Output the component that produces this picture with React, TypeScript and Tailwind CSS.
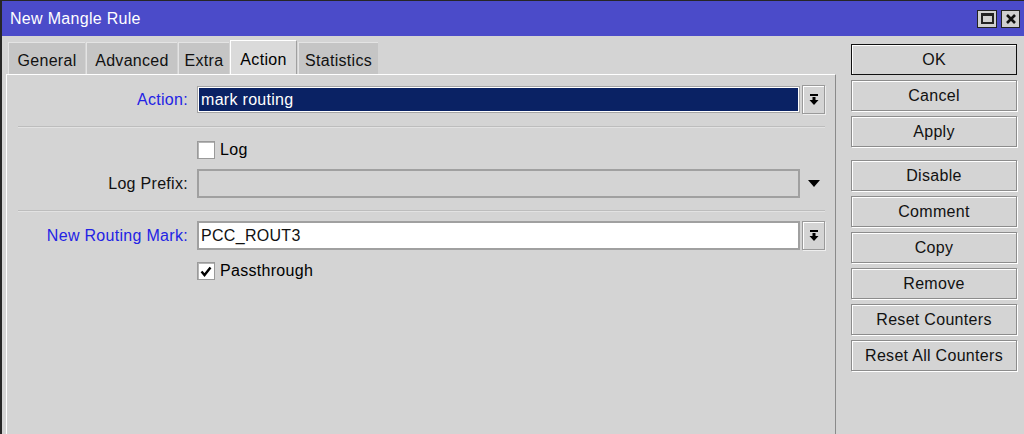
import React from "react";

const FONT = "font-['Liberation_Sans',Arial,sans-serif]";

function DropArrow() {
  return (
    <svg width="10" height="12" viewBox="0 0 10 12">
      <rect x="1" y="0" width="8" height="2" fill="#000" />
      <rect x="3.5" y="3" width="3" height="3" fill="#000" />
      <polygon points="0.5,6 9.5,6 5,11" fill="#000" />
    </svg>
  );
}

function DropButton() {
  return (
    <div className="ml-[2px] flex h-[29px] w-[23px] items-center justify-center border border-[#9a9a9a] shadow-[inset_1px_1px_0_#fff,1px_1px_0_#eee]">
      <DropArrow />
    </div>
  );
}

function Checkbox({ checked }: { checked?: boolean }) {
  return (
    <div className="flex h-[18px] w-[18px] items-center justify-center border border-[#9a9a9a] bg-white shadow-[inset_1px_1px_0_#b5b5b5]">
      {checked && (
        <svg width="12" height="11" viewBox="0 0 12 11">
          <polyline points="1.5,5.5 4.5,9 10.5,1.5" fill="none" stroke="#000" strokeWidth="2.4" />
        </svg>
      )}
    </div>
  );
}

function Separator() {
  return <div className="ml-[11px] h-[2px] w-[807px] border-t border-b border-t-[#bdbdbd] border-b-[#e2e2e2]" />;
}

function Row({ label, blue, children }: { label: string; blue?: boolean; children: React.ReactNode }) {
  return (
    <div className="flex h-[29px] items-center">
      <div className={`w-[181px] text-right ${blue ? "text-[#2323e4]" : "text-[#111]"}`}>{label}</div>
      <div className="ml-[9px] flex items-center">{children}</div>
    </div>
  );
}

const TABS = [
  { name: "General", w: "w-[77px]" },
  { name: "Advanced", w: "w-[91px]" },
  { name: "Extra", w: "w-[51px]" },
  { name: "Action", w: "w-[67px]", active: true },
  { name: "Statistics", w: "w-[80px]" },
];

const BUTTONS_TOP = ["Cancel", "Apply"];
const BUTTONS_BOTTOM = ["Disable", "Comment", "Copy", "Remove", "Reset Counters", "Reset All Counters"];

function Btn({ label, main }: { label: string; main?: boolean }) {
  return (
    <div
      className={`flex h-[31px] w-[166px] items-center justify-center text-[#111] ${
        main
          ? "border border-[#111] shadow-[inset_1px_1px_0_#fff]"
          : "border border-[#8c8c8c] shadow-[inset_1px_1px_0_#fff,1px_1px_0_#fff]"
      }`}
    >
      {label}
    </div>
  );
}

export default function App() {
  return (
    <div className={`${FONT} flex h-[434px] w-[1024px] flex-col overflow-hidden border-l-2 border-t border-[#262626] bg-[#d4d4d4] text-[16px] tracking-[0.3px]`}>
      {/* Title bar */}
      <div className="flex h-[35px] shrink-0 items-center justify-between bg-[#4b4bc9] pl-[8px] pr-[4px]">
        <span className="text-white">New Mangle Rule</span>
        <div className="flex gap-[4px]">
          <div className="flex h-[18px] w-[20px] items-center justify-center border border-[#222] bg-[#d0d0d0]">
            <div className="h-[11px] w-[13px] border-2 border-t-[3px] border-[#222]" />
          </div>
          <div className="flex h-[18px] w-[19px] items-center justify-center border border-[#222] bg-[#d0d0d0]">
            <svg width="10" height="10" viewBox="0 0 10 10">
              <path d="M1 1 L9 9 M9 1 L1 9" stroke="#111" strokeWidth="2.6" />
            </svg>
          </div>
        </div>
      </div>

      <div className="flex flex-1">
        {/* Left: tabs + panel */}
        <div className="flex w-[834px] flex-col pt-[4px]">
          <div className="flex h-[34px] items-end gap-[1px] pl-[6px]">
            {TABS.map((t) =>
              t.active ? (
                <div
                  key={t.name}
                  className={`${t.w} flex h-[34px] items-start justify-center border-l border-t border-r border-l-white border-t-white border-r-[#a0a0a0] bg-[#dadada] pt-[7px]`}
                >
                  {t.name}
                </div>
              ) : (
                <div
                  key={t.name}
                  className={`${t.w} flex h-[32px] items-center justify-center border-l border-t border-l-[#e4e4e4] border-t-[#e4e4e4] bg-[#c5c5c5] pt-[4px] text-[#111]`}
                >
                  {t.name}
                </div>
              )
            )}
          </div>

          <div className="ml-[4px] flex w-[830px] flex-1 flex-col border-l border-t border-r border-l-white border-t-white border-r-[#8a8a8a]">
            <div className="mt-[10px]">
              <Row label="Action:" blue>
                <div className="h-[27px] w-[603px] border border-[#a5a5a5] bg-white p-[1px]">
                  <div className="flex h-full items-center bg-[#0a2264] pl-[2px] text-white">mark routing</div>
                </div>
                <DropButton />
              </Row>
            </div>

            <div className="mt-[12px]">
              <Separator />
            </div>

            <div className="ml-[190px] mt-[13px] flex h-[18px] items-center gap-[5px]">
              <Checkbox />
              <span>Log</span>
            </div>

            <div className="mt-[10px]">
              <Row label="Log Prefix:">
                <div className="h-[29px] w-[603px] border-2 border-[#a0a0a0] bg-[#d4d4d4]" />
                <div className="ml-[2px] flex h-[29px] w-[23px] items-center justify-center">
                  <svg width="12" height="7" viewBox="0 0 12 7">
                    <polygon points="0,0 12,0 6,7" fill="#000" />
                  </svg>
                </div>
              </Row>
            </div>

            <div className="mt-[12px]">
              <Separator />
            </div>

            <div className="mt-[9px]">
              <Row label="New Routing Mark:" blue>
                <div className="flex h-[29px] w-[603px] items-center border-2 border-[#a0a0a0] bg-white pl-[2px] text-[#111]">
                  PCC_ROUT3
                </div>
                <DropButton />
              </Row>
            </div>

            <div className="ml-[190px] mt-[12px] flex h-[18px] items-center gap-[5px]">
              <Checkbox checked />
              <span>Passthrough</span>
            </div>
          </div>
        </div>

        {/* Right: buttons */}
        <div className="flex flex-1 flex-col pl-[15px] pt-[8px]">
          <Btn label="OK" main />
          <div className="mt-[5px] flex flex-col gap-[5px]">
            {BUTTONS_TOP.map((b) => (
              <Btn key={b} label={b} />
            ))}
          </div>
          <div className="mt-[13px] flex flex-col gap-[5px]">
            {BUTTONS_BOTTOM.map((b) => (
              <Btn key={b} label={b} />
            ))}
          </div>
        </div>
      </div>
    </div>
  );
}
